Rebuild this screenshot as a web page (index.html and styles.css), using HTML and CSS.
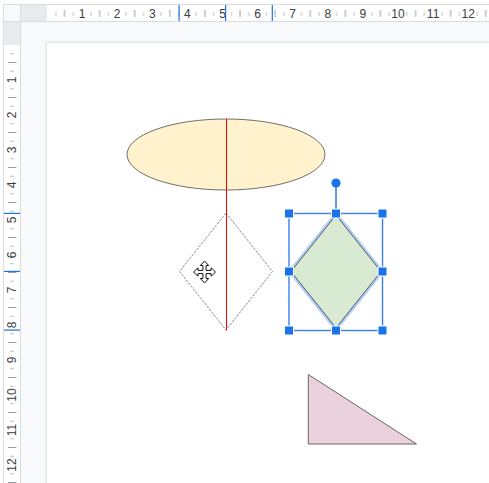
FILE: index.html
```html
<!DOCTYPE html>
<html>
<head>
<meta charset="utf-8">
<link rel="stylesheet" href="styles.css">
</head>
<body>
<div class="app">
  <div class="corner"></div>
  <div class="ruler-h">
    <svg class="ruler-svg" width="468" height="16" viewBox="21 5 468 16">
      <defs>
        <pattern id="tickH" patternUnits="userSpaceOnUse" x="47" y="5" width="35.1" height="16">
          <rect x="8.3" y="7" width="1" height="4" fill="#bdc1c6"/>
          <rect x="17.05" y="5" width="1" height="7" fill="#9aa0a6"/>
          <rect x="25.8" y="7" width="1" height="4" fill="#bdc1c6"/>
        </pattern>
      </defs>
      <rect x="21" y="5" width="26" height="16" fill="#e8eaed"/>
      <rect x="47" y="5" width="442" height="16" fill="url(#tickH)"/>
      <g class="rnum" text-anchor="middle">
        <text x="82.1" y="18.3">1</text>
        <text x="117.2" y="18.3">2</text>
        <text x="152.3" y="18.3">3</text>
        <text x="187.4" y="18.3">4</text>
        <text x="222.5" y="18.3">5</text>
        <text x="257.6" y="18.3">6</text>
        <text x="292.7" y="18.3">7</text>
        <text x="327.8" y="18.3">8</text>
        <text x="362.9" y="18.3">9</text>
        <text x="398" y="18.3">10</text>
        <text x="433.1" y="18.3">11</text>
        <text x="468.2" y="18.3">12</text>
      </g>
      <g fill="#1a73e8">
        <rect x="178.5" y="5" width="1.2" height="16"/>
        <rect x="225" y="5" width="1.2" height="16"/>
        <rect x="271.7" y="5" width="1.2" height="16"/>
      </g>
    </svg>
  </div>
  <div class="ruler-v">
    <svg class="ruler-svg" width="16" height="461" viewBox="4 22 16 461">
      <defs>
        <pattern id="tickV" patternUnits="userSpaceOnUse" x="4" y="45" width="16" height="35">
          <rect x="6" y="8.25" width="4" height="1" fill="#bdc1c6"/>
          <rect x="4" y="17" width="8.5" height="1" fill="#9aa0a6"/>
          <rect x="6" y="25.75" width="4" height="1" fill="#bdc1c6"/>
        </pattern>
      </defs>
      <rect x="4" y="22" width="16" height="23" fill="#e8eaed"/>
      <rect x="4" y="45" width="16" height="440" fill="url(#tickV)"/>
      <g class="rnum" text-anchor="middle" dominant-baseline="central">
        <text transform="translate(11.5 80) rotate(-90)">1</text>
        <text transform="translate(11.5 115) rotate(-90)">2</text>
        <text transform="translate(11.5 150) rotate(-90)">3</text>
        <text transform="translate(11.5 185) rotate(-90)">4</text>
        <text transform="translate(11.5 220) rotate(-90)">5</text>
        <text transform="translate(11.5 255) rotate(-90)">6</text>
        <text transform="translate(11.5 290) rotate(-90)">7</text>
        <text transform="translate(11.5 325) rotate(-90)">8</text>
        <text transform="translate(11.5 360) rotate(-90)">9</text>
        <text transform="translate(11.5 395) rotate(-90)">10</text>
        <text transform="translate(11.5 430) rotate(-90)">11</text>
        <text transform="translate(11.5 465) rotate(-90)">12</text>
      </g>
      <g fill="#1a73e8">
        <rect x="4" y="212.8" width="16" height="1.2"/>
        <rect x="4" y="270.8" width="16" height="1.2"/>
        <rect x="4" y="329.5" width="16" height="1.2"/>
      </g>
    </svg>
  </div>
  <div class="workspace">
    <div class="page">
      <svg class="drawing" width="442" height="440" viewBox="47 43 442 440">
        <ellipse cx="226" cy="154.5" rx="99" ry="35.5" fill="#fff2cc" stroke="#5f5f5f" stroke-width="0.9"/>
        <path d="M226,213 L272.5,271.5 L226,330 L179.5,271.5 Z" fill="none" stroke="#8a8a8a" stroke-width="1" stroke-dasharray="2.5 1.2"/>
        <line x1="226.5" y1="119" x2="226.5" y2="330.5" stroke="#ff0000" stroke-width="1"/>
        <path d="M0,-11 L4.2,-6.5 L1.6,-6.5 L1.6,-1.6 L6.5,-1.6 L6.5,-4.2 L11,0 L6.5,4.2 L6.5,1.6 L1.6,1.6 L1.6,6.5 L4.2,6.5 L0,11 L-4.2,6.5 L-1.6,6.5 L-1.6,1.6 L-6.5,1.6 L-6.5,4.2 L-11,0 L-6.5,-4.2 L-6.5,-1.6 L-1.6,-1.6 L-1.6,-6.5 L-4.2,-6.5 Z" transform="translate(204.5 272)" fill="#fff" stroke="#111" stroke-width="1" stroke-linejoin="miter"/>

        <path d="M336,215 L381,271.5 L336,328 L291,271.5 Z" fill="none" stroke="#aecbfa" stroke-width="5" stroke-linejoin="round"/>
        <path d="M336,215 L381,271.5 L336,328 L291,271.5 Z" fill="#d9ead3" stroke="#4d4d4d" stroke-width="0.9"/>

        <rect x="289" y="213.5" width="93.5" height="117" fill="none" stroke="#3b82ee" stroke-width="1.4"/>
        <line x1="336" y1="186" x2="336" y2="213.5" stroke="#1a73e8" stroke-width="1.4"/>
        <circle cx="336" cy="183" r="4.6" fill="#1a73e8"/>
        <g fill="#1a73e8" stroke="#fff" stroke-width="1">
          <rect x="284.5" y="209" width="9" height="9"/>
          <rect x="331.5" y="209" width="9" height="9"/>
          <rect x="378" y="209" width="9" height="9"/>
          <rect x="284.5" y="267" width="9" height="9"/>
          <rect x="378" y="267" width="9" height="9"/>
          <rect x="284.5" y="326" width="9" height="9"/>
          <rect x="331.5" y="326" width="9" height="9"/>
          <rect x="378" y="326" width="9" height="9"/>
        </g>

        <path d="M308.3,374.5 L308.3,444 L416.5,444 Z" fill="#ead1dc" stroke="#666" stroke-width="1"/>
      </svg>
    </div>
  </div>
</div>
</body>
</html>
```

FILE: styles.css
```css
html, body {
  margin: 0;
  padding: 0;
  background: #fff;
  width: 489px;
  height: 483px;
  overflow: hidden;
}

.app {
  display: grid;
  grid-template-columns: 17px 1fr;
  grid-template-rows: 17px 1fr;
  margin: 4px 0 0 3px;
  height: 479px;
  border-top: 1px solid #dadce0;
  border-left: 1px solid #dadce0;
  box-sizing: border-box;
}

.corner {
  background: #f8f9fa;
  border-right: 1px solid #dadce0;
  border-bottom: 1px solid #dadce0;
}

.ruler-h {
  background: #fff;
  border-bottom: 1px solid #dadce0;
  overflow: hidden;
}

.ruler-v {
  background: #fff;
  border-right: 1px solid #dadce0;
  overflow: hidden;
}

.ruler-svg {
  display: block;
}

.rnum {
  font-family: "Liberation Sans", Arial, sans-serif;
  font-size: 12px;
  fill: #3c4043;
}

.workspace {
  background: #f8f9fa;
  overflow: hidden;
  min-height: 0;
  min-width: 0;
}

.page {
  margin: 21px 0 0 26px;
  height: 460px;
  background: #fff;
  box-shadow: 0 0 0 1px #e3e4e6, -1px -1px 2px rgba(60, 64, 67, 0.15);
}

.drawing {
  display: block;
}
```
